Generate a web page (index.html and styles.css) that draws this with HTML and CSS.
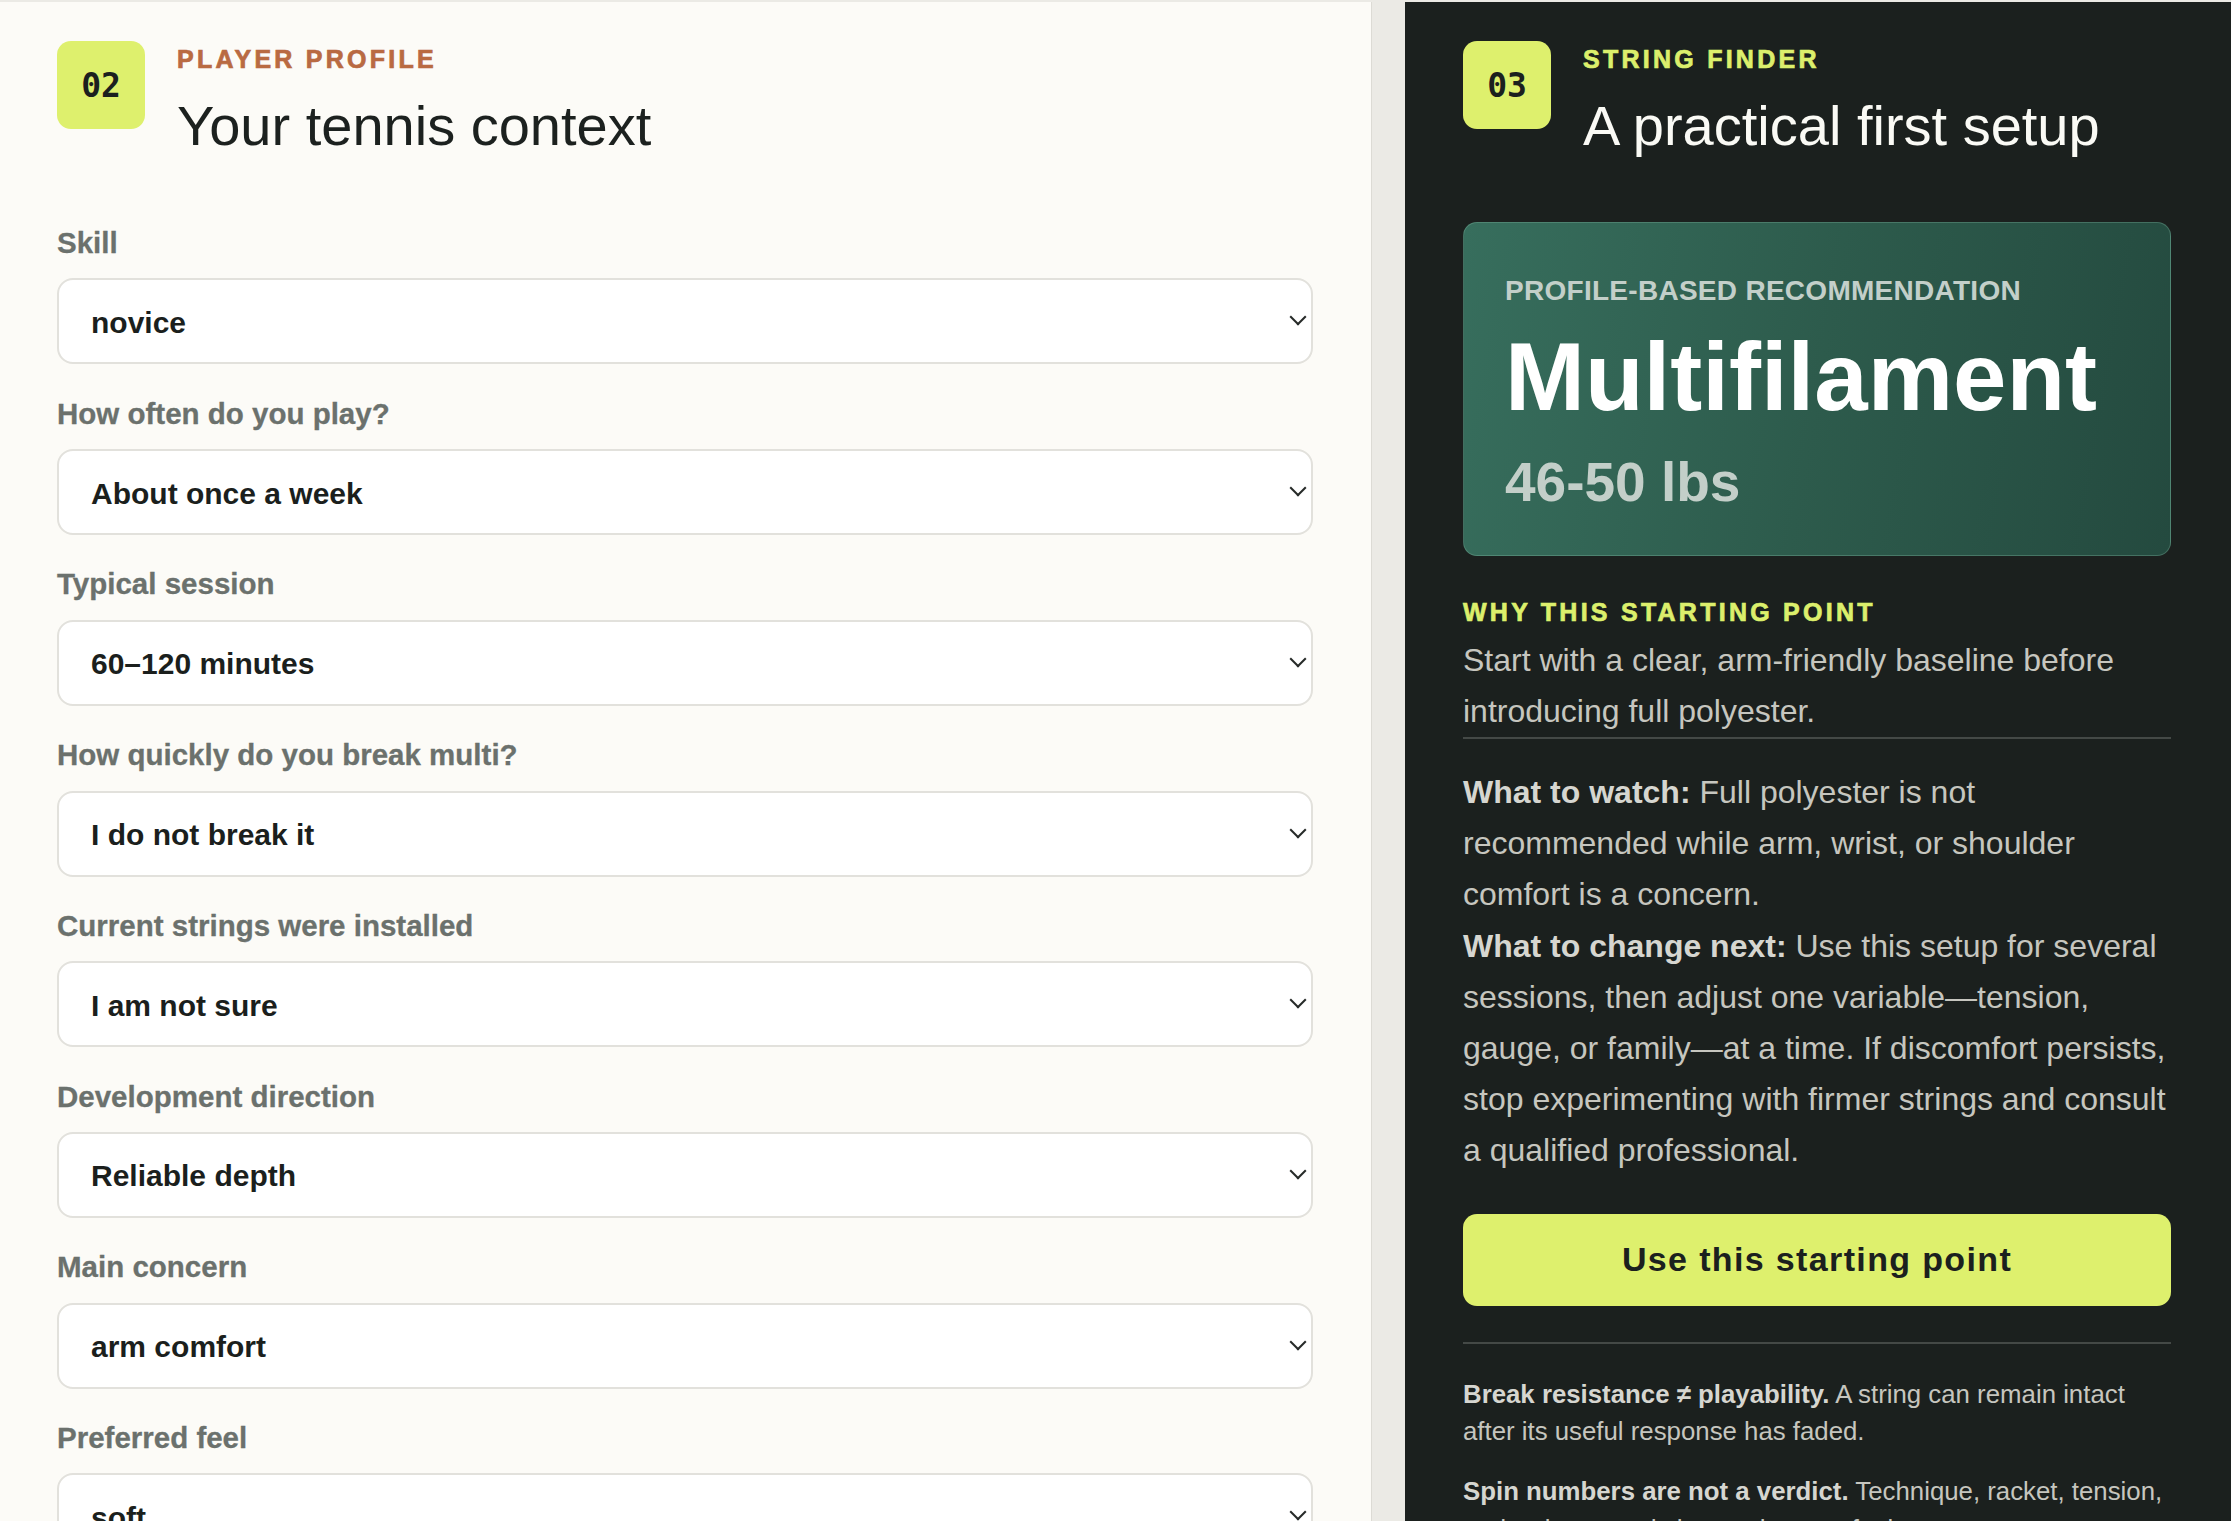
FILE: index.html
```html
<!DOCTYPE html>
<html lang="en">
<head>
  <meta charset="UTF-8" />
  <title>String Finder | Player Profile</title>
  <meta name="viewport" content="width=device-width, initial-scale=1.0"/>
  <link rel="stylesheet" href="styles.css">
</head>
<body>
  <main class="layout">

    <!-- Step 02: player profile form -->
    <section class="panel profile">
      <header class="step-head">
        <div class="step-num">02</div>
        <div class="step-text">
          <p class="eyebrow">Player profile</p>
          <h2 class="step-title">Your tennis context</h2>
        </div>
      </header>

      <form class="profile-form">
        <div class="field">
          <label for="skill">Skill</label>
          <div class="select-wrap">
            <select id="skill" name="skill">
              <option selected>novice</option>
              <option>intermediate</option>
              <option>advanced</option>
            </select>
          </div>
        </div>

        <div class="field">
          <label for="frequency">How often do you play?</label>
          <div class="select-wrap">
            <select id="frequency" name="frequency">
              <option>Less than once a week</option>
              <option selected>About once a week</option>
              <option>Two or three times a week</option>
              <option>Almost every day</option>
            </select>
          </div>
        </div>

        <div class="field">
          <label for="session">Typical session</label>
          <div class="select-wrap">
            <select id="session" name="session">
              <option>Under 60 minutes</option>
              <option selected>60–120 minutes</option>
              <option>Over 2 hours</option>
            </select>
          </div>
        </div>

        <div class="field">
          <label for="breakage">How quickly do you break multi?</label>
          <div class="select-wrap">
            <select id="breakage" name="breakage">
              <option selected>I do not break it</option>
              <option>Within a month</option>
              <option>Within a week</option>
            </select>
          </div>
        </div>

        <div class="field">
          <label for="installed">Current strings were installed</label>
          <div class="select-wrap">
            <select id="installed" name="installed">
              <option>Less than a month ago</option>
              <option>A few months ago</option>
              <option selected>I am not sure</option>
            </select>
          </div>
        </div>

        <div class="field">
          <label for="direction">Development direction</label>
          <div class="select-wrap">
            <select id="direction" name="direction">
              <option selected>Reliable depth</option>
              <option>More spin</option>
              <option>More control</option>
            </select>
          </div>
        </div>

        <div class="field">
          <label for="concern">Main concern</label>
          <div class="select-wrap">
            <select id="concern" name="concern">
              <option selected>arm comfort</option>
              <option>durability</option>
              <option>tension loss</option>
            </select>
          </div>
        </div>

        <div class="field">
          <label for="feel">Preferred feel</label>
          <div class="select-wrap">
            <select id="feel" name="feel">
              <option selected>soft</option>
              <option>balanced</option>
              <option>firm</option>
            </select>
          </div>
        </div>
      </form>
    </section>

    <!-- Step 03: recommendation -->
    <aside class="panel result">
      <header class="step-head">
        <div class="step-num">03</div>
        <div class="step-text">
          <p class="eyebrow">String finder</p>
          <h2 class="step-title">A practical first setup</h2>
        </div>
      </header>

      <div class="rec-card">
        <p class="rec-label">Profile-based recommendation</p>
        <p class="rec-name">Multifilament</p>
        <p class="rec-tension">46-50 lbs</p>
      </div>

      <div class="why">
        <p class="eyebrow">Why this starting point</p>
        <p class="why-text">Start with a clear, arm-friendly baseline before introducing full polyester.</p>
      </div>

      <div class="advice">
        <p><strong>What to watch:</strong> Full polyester is not recommended while arm, wrist, or shoulder comfort is a concern.</p>
        <p><strong>What to change next:</strong> Use this setup for several sessions, then adjust one variable—tension, gauge, or family—at a time. If discomfort persists, stop experimenting with firmer strings and consult a qualified professional.</p>
      </div>

      <button type="button" class="btn-use">Use this starting point</button>

      <div class="notes">
        <p><strong>Break resistance ≠ playability.</strong> A string can remain intact after its useful response has faded.</p>
        <p><strong>Spin numbers are not a verdict.</strong> Technique, racket, tension, and swing speed shape what you feel on court.</p>
      </div>
    </aside>

  </main>
</body>
</html>
```

FILE: styles.css
```css
* {
  box-sizing: border-box;
}

body {
  margin: 0;
  padding-top: 2px;
  background: #ebeae5;
  font-family: "Liberation Sans", Arial, sans-serif;
  color: #1c211f;
}

.layout {
  display: grid;
  grid-template-columns: 1fr 826px;
  gap: 33px;
}

.panel {
  padding: 39px 60px 60px 58px;
}

/* left: form panel */
.profile {
  background: #fcfbf7;
  border-right: 1px solid #dcdbd5;
  padding: 39px 58px 60px 57px;
}

/* right: dark result panel */
.result {
  background: #1b201e;
  color: #c6c6bf;
}

.step-head {
  display: flex;
  align-items: flex-start;
  gap: 32px;
  margin-bottom: 66px;
}

.step-num {
  flex-shrink: 0;
  width: 88px;
  height: 88px;
  border-radius: 14px;
  background: #def06d;
  color: #1b201e;
  display: flex;
  align-items: center;
  justify-content: center;
  font-family: "DejaVu Sans Mono", "Liberation Mono", monospace;
  font-weight: 700;
  font-size: 33px;
}

.eyebrow {
  margin: 0;
  font-size: 25px;
  font-weight: 700;
  line-height: 1.5;
  letter-spacing: 0.13em;
  text-transform: uppercase;
  color: #b96a42;
  -webkit-text-stroke: 0.7px currentColor;
}

.result .eyebrow {
  color: #dcef6c;
}

.step-title {
  margin: 16px 0 0;
  font-size: 56px;
  font-weight: 400;
  line-height: 1.1;
  color: #1c211f;
}

.result .step-title {
  color: #fafaf5;
}

/* form fields */
.profile-form {
  padding-top: 3px;
}

.field {
  margin-bottom: 31.3px;
}

.field label {
  display: block;
  margin-bottom: 18px;
  font-size: 29.5px;
  font-weight: 700;
  line-height: 1.2;
  color: #6b716d;
  -webkit-text-stroke: 0.3px currentColor;
}

.select-wrap {
  position: relative;
}

.select-wrap select {
  display: block;
  width: 100%;
  height: 86px;
  padding: 2px 48px 0 32px;
  border: 2px solid #e2e1dc;
  border-radius: 16px;
  background: #fff;
  font-family: inherit;
  font-size: 30px;
  font-weight: 700;
  color: #1b1f1d;
  appearance: none;
  -webkit-appearance: none;
}

/* chevron drawn from two borders of a rotated square */
.select-wrap::after {
  content: "";
  position: absolute;
  right: 9px;
  top: calc(50% - 10px);
  width: 10px;
  height: 10px;
  border-right: 2px solid #262a28;
  border-bottom: 2px solid #262a28;
  transform: rotate(45deg);
  pointer-events: none;
}

/* recommendation card */
.rec-card {
  padding: 51px 42px 40px 41px;
  border: 1px solid rgba(140, 196, 172, 0.3);
  border-radius: 14px;
  background: linear-gradient(100deg, #376e5d 0%, #2d5b4c 50%, #244a3f 100%);
}

.rec-card p {
  margin: 0;
}

.rec-label {
  font-size: 28px;
  font-weight: 700;
  line-height: 1.2;
  letter-spacing: 0.01em;
  text-transform: uppercase;
  color: #c3cfc9;
}

.rec-card .rec-name {
  margin-top: 21px;
  font-size: 96px;
  font-weight: 700;
  line-height: 1;
  color: #fff;
}

.rec-card .rec-tension {
  margin-top: 24px;
  font-size: 55px;
  font-weight: 700;
  line-height: 1.2;
  color: #c3cfc9;
}

.why {
  margin-top: 41px;
  border-bottom: 2px solid #444946;
}

.why .eyebrow {
  line-height: 1.2;
}

.why-text,
.advice p {
  margin: 0;
  font-size: 32px;
  line-height: 1.6;
}

.why-text {
  margin-top: 8px;
}

.advice {
  margin-top: 28px;
}

.result strong {
  color: #d6d6d0;
}

.btn-use {
  display: block;
  width: 100%;
  height: 92px;
  margin-top: 37px;
  border: none;
  border-radius: 14px;
  background: #def06d;
  color: #1b201e;
  font-family: inherit;
  font-size: 34px;
  font-weight: 700;
  letter-spacing: 0.04em;
  cursor: pointer;
}

.notes {
  margin-top: 36px;
  padding-top: 32px;
  border-top: 2px solid #444946;
}

.notes p {
  margin: 0 0 22px;
  font-size: 25.8px;
  line-height: 1.46;
}
```
